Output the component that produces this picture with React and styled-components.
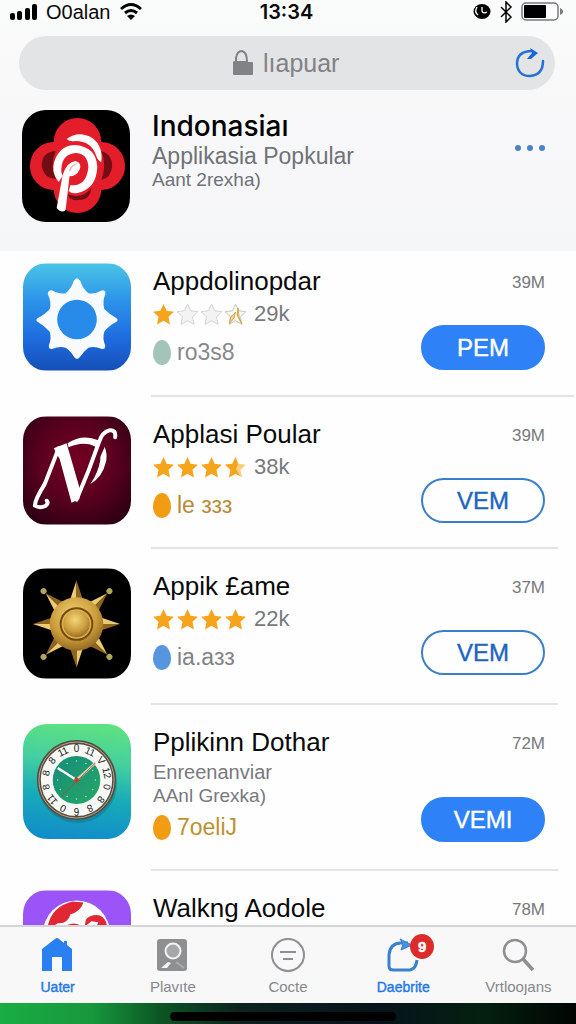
import React from "react";
import styled, { createGlobalStyle } from "styled-components";

const GlobalStyle = createGlobalStyle`
  * { box-sizing: border-box; }
  body { margin: 0; background: #fefefe; font-family: "Liberation Sans", Arial, sans-serif; color: #0a0a0a; }
  button, input { font: inherit; color: inherit; background: none; border: 0; padding: 0; margin: 0; }
  h1, h2, p, ul { margin: 0; padding: 0; font-weight: 400; }
  svg { display: block; flex: none; }
`;

const Screen = styled.div`
  display: flex;
  flex-direction: column;
  height: 100vh;
  overflow: hidden;
`;

const Header = styled.header`
  flex: none;
  background: linear-gradient(#fafbfb, #f8f8f9 40%, #f5f6f8);
  padding-bottom: 29px;
`;

const StatusBar = styled.div`
  display: grid;
  grid-template-columns: 1fr auto 1fr;
  align-items: center;
  height: 24px;
  padding: 0 12px 0 9px;
`;

const StatusGroup = styled.div`
  display: flex;
  align-items: center;
  justify-content: ${(p) => (p.$end ? "flex-end" : "flex-start")};
  gap: 8px;
  font-size: 20px;
  line-height: 24px;
`;

const Clock = styled.time`
  font: 600 20px/24px Inter, sans-serif;
`;

const AddressBar = styled.form`
  display: flex;
  align-items: center;
  height: 54px;
  margin: 12px 21px 0 19px;
  padding: 0 10px 0 42px;
  border-radius: 27px;
  background: #e3e4e5;
`;

const Address = styled.label`
  flex: 1;
  display: flex;
  align-items: center;
  justify-content: center;
  gap: 10px;
  color: #808285;
`;

const AddressInput = styled.input`
  width: 80px;
  height: 36px;
  font-size: 25px;
  outline: none;
`;

const IconButton = styled.button`
  display: flex;
  cursor: pointer;
`;

const Feature = styled.section`
  display: flex;
  align-items: flex-start;
  gap: 22px;
  margin: 20px 30px 0 22px;
`;

const AppIcon = styled.svg`
  width: 108px;
  height: ${(p) => p.$height}px;
  border-radius: 24px;
`;

const Main = styled.div`
  flex: 1;
  min-width: 0;
`;

const FeatureTitle = styled.h1`
  font: 500 28px/32px Inter, sans-serif;
  color: #000;
`;

const FeatureNote = styled.p`
  font-size: ${(p) => (p.$small ? 19 : 23)}px;
  line-height: ${(p) => (p.$small ? 20 : 28)}px;
  color: #6f7276;
`;

const MoreButton = styled(IconButton)`
  margin-top: 34px;
`;

const List = styled.ul`
  flex: 1;
  min-height: 0;
  overflow: hidden;
  list-style: none;
`;

const Row = styled.li`
  display: flex;
  align-items: flex-start;
  gap: 22px;
  min-height: ${(p) => p.$height}px;
  padding: ${(p) => (p.$first ? 12 : 19)}px 31px 0 23px;
  position: relative;
  &::after {
    content: "";
    position: absolute;
    left: 151px;
    right: ${(p) => (p.$first ? 2 : 18)}px;
    bottom: 0;
    height: 2px;
    background: #e3e4e6;
  }
`;

const Title = styled.h2`
  font-size: 26px;
  line-height: 36px;
  white-space: nowrap;
`;

const Rating = styled.div`
  display: flex;
  align-items: center;
  gap: 3px;
  height: 30px;
`;

const Votes = styled.span`
  margin-left: 5px;
  font-size: 22px;
  color: #77797c;
`;

const Detail = styled.p`
  font-size: ${(p) => (p.$small ? 19 : 20)}px;
  line-height: 24px;
  color: #77797c;
`;

const Tag = styled.p`
  display: flex;
  align-items: center;
  gap: 6px;
  margin-top: ${(p) => (p.$tight ? 4 : 8)}px;
  font-size: 23px;
  line-height: 30px;
  color: ${(p) => p.$color};
`;

const Drop = styled.span`
  width: 18px;
  height: 25px;
  border-radius: 9px / 14px 14px 11px 11px;
  background: ${(p) => p.$color};
`;

const Side = styled.div`
  display: flex;
  flex-direction: column;
  align-items: flex-end;
`;

const Size = styled.span`
  font-size: 17px;
  line-height: 40px;
  height: 36px;
  color: #77797c;
`;

const GetButton = styled.button`
  width: 124px;
  height: 45px;
  margin-top: ${(p) => (p.$low ? 37 : 26)}px;
  border-radius: 23px;
  border: 2px solid ${(p) => (p.$filled ? "#2f81f7" : "#3b7fcb")};
  background: ${(p) => (p.$filled ? "#2f81f7" : "#fefefe")};
  color: ${(p) => (p.$filled ? "#fff" : "#1d66bf")};
  font-size: 24px;
  -webkit-text-stroke: 0.4px currentColor;
  cursor: pointer;
`;

const TabBar = styled.nav`
  flex: none;
  display: flex;
  height: 78px;
  border-top: 2px solid #d5d5d9;
  background: #f8f8f9;
`;

const Tab = styled.a`
  flex: 1;
  display: flex;
  flex-direction: column;
  align-items: center;
  gap: 4px;
  padding-top: 10px;
  font-size: ${(p) => (p.$active ? 14 : 15)}px;
  line-height: 20px;
  text-decoration: none;
  color: ${(p) => (p.$active ? "#1f78e4" : "#85878a")};
  ${(p) => p.$active && "-webkit-text-stroke: 0.4px currentColor;"}
`;

const TabIcon = styled.span`
  position: relative;
  display: block;
`;

const Badge = styled.span`
  position: absolute;
  left: 24px;
  top: -3px;
  width: 24px;
  height: 25px;
  border-radius: 50%;
  background: #dd2b2b;
  color: #fff;
  font: 700 15px/25px "Liberation Sans", sans-serif;
  text-align: center;
`;

const HomeStrip = styled.footer`
  flex: none;
  display: flex;
  justify-content: center;
  height: 21px;
  padding: 9px 10px 0 0;
  background: linear-gradient(90deg, #19ad43 0%, #17983c 16%, #0c5423 28%, #0c2220 42%, #07131b 65%, #03200f 84%, #010503 100%);
`;

const HomeIndicator = styled.span`
  width: 40%;
  height: 9px;
  border-radius: 5px;
  background: #000;
`;

const STAR = "M10.500 0 L13.600 6.800 L21 7.700 L15.500 12.700 L17 20.500 L10.500 16.700 L4 20.500 L5.500 12.700 L0 7.700 L7.400 6.800 Z";

function Star({ kind }) {
  const gold = "#f5a41c";
  return (
    <svg width="21" height="21" viewBox="0 0 21 21" aria-hidden="true">
      {kind === "full" && <path d={STAR} fill={gold} />}
      {kind === "empty" && <path d={STAR} fill="#f3f3f4" stroke="#d3d4d7" />}
      {kind === "thin" && (
        <>
          <path d={STAR} fill="#faf8f3" stroke="#c9c7c0" />
          <path d="M10.500 8 L9 14 L4.500 19.500 L5.800 12.700 L9 10 Z M13 4 L12 11 L16.500 19.500 L14 13Z" fill="#f3d690" stroke="#c99834" strokeWidth="0.800" />
        </>
      )}
      {kind === "most" && (
        <>
          <path d={STAR} fill="#f8cf7f" />
          <path d="M10.500 0 L13 7 L11 12 L15 19 L10.500 16.700 L4 20.500 L5.500 12.700 L0 7.700 L7.400 6.800 Z" fill={gold} />
        </>
      )}
    </svg>
  );
}

function FlowerArt() {
  return (
    <AppIcon $height={112} viewBox="0 0 109 112" preserveAspectRatio="none" aria-hidden="true">
      <rect width="109" height="112" />
      <g fill="#e41d2a">
        <circle cx="56" cy="32" r="24" />
        <circle cx="32" cy="56" r="24" />
        <circle cx="80" cy="56" r="24" />
        <circle cx="56" cy="79" r="24" />
      </g>
      <g fill="#720d14">
        <path d="M34 41 Q20 42 20 55 Q21 68 34 69 Q28 55 34 41Z" />
        <path d="M80 41 Q91 44 91 56 Q90 68 80 70 Q86 55 80 41Z" />
        <path d="M46 84 Q60 90 70 78 Q69 90 57 90 Q48 91 46 84Z" />
      </g>
      <path
        d="M37 72 Q28 61 34 48 Q40 35 54 35 Q75 37 76 57 Q75 79 56 83 Q50 84 47 81 L49 75 Q65 77 67 57 Q66 43 54 43 Q42 44 40 56 Q39 62 41 66Z"
        fill="#fff"
      />
      <path d="M45 29 Q57 20 71 28 Q82 36 80 52 Q76 50 75 46 Q70 31 54 31 Q48 32 45 29Z" fill="#fff" />
      <path d="M35 98 L41 65 Q45 52 54 51 Q61 53 58 60 Q54 67 48 66 L44 100 Q40 104 35 98Z" fill="#fff" />
      <path d="M48 61 Q50 55 55 54" stroke="#e7b6b6" strokeWidth="1.500" fill="none" />
    </AppIcon>
  );
}

function SunArt() {
  return (
    <AppIcon $height={108} viewBox="0 0 109 108" aria-hidden="true">
      <defs>
        <linearGradient id="sky" x1="0" y1="0" x2="0" y2="1">
          <stop offset="0" stopColor="#4ac4e6" />
          <stop offset="0.350" stopColor="#2c93e9" />
          <stop offset="0.700" stopColor="#1f6ce0" />
          <stop offset="1" stopColor="#154fb6" />
        </linearGradient>
      </defs>
      <rect width="109" height="108" fill="url(#sky)" />
      <path
        d="M51 18 Q54.500 12 58 18 Q60 25 66 30 Q73 31 80 27 Q84 27 83 31 Q80 38 82 46 Q87 51 94 55 Q97 57 94 59 Q86 63 82 69 Q80 76 83 83 Q83 87 79 86 Q72 83 66 85 Q61 89 57 95 Q54.500 98 52 95 Q48 88 43 85 Q37 83 30 86 Q26 87 26 83 Q29 76 27 69 Q22 63 15 59 Q12 57 15 55 Q23 51 27 46 Q29 39 25 31 Q25 27 29 27 Q37 31 43 30 Q49 25 51 18Z"
        fill="#f7fafe"
      />
      <circle cx="54.500" cy="56.500" r="20" fill="#288bea" />
    </AppIcon>
  );
}

function MonogramArt() {
  return (
    <AppIcon $height={109} viewBox="0 0 109 109" aria-hidden="true">
      <defs>
        <radialGradient id="wine" cx="50%" cy="42%" r="70%">
          <stop offset="0" stopColor="#750022" />
          <stop offset="0.500" stopColor="#5a001e" />
          <stop offset="1" stopColor="#280011" />
        </radialGradient>
      </defs>
      <rect width="109" height="109" fill="url(#wine)" />
      <path d="M45 27 Q60 17 76 24 Q86 30 84 45 Q80 62 68 68 Q76 57 78 44 Q79 31 67 28 Q57 26 46 31Z" fill="#fff" />
      <path d="M82 22 L68 53 L56 80" stroke="#610020" strokeWidth="8" fill="none" />
      <path d="M93 21 Q94 13 87 14 Q80 16 77 25 Q67 54 54 84" fill="none" stroke="#fff" strokeWidth="4" strokeLinecap="round" />
      <path d="M36 32 L22 68 Q12 84 12 90 Q17 93 23 90 Q26 88 24 85" fill="none" stroke="#fff" strokeWidth="4" strokeLinecap="round" />
      <path d="M31 32 L44 27 L57 72 L57 83 L49 87 L37 43Z" fill="#fff" />
    </AppIcon>
  );
}

function CompassArt() {
  return (
    <AppIcon $height={111} viewBox="0 0 109 111" aria-hidden="true">
      <defs>
        <radialGradient id="gold" cx="45%" cy="35%" r="70%">
          <stop offset="0" stopColor="#f3d679" />
          <stop offset="0.600" stopColor="#cb9c3b" />
          <stop offset="1" stopColor="#8a611b" />
        </radialGradient>
      </defs>
      <rect width="109" height="111" />
      {[0, 45, 90, 135, 180, 225, 270, 315].map((angle) => (
        <g key={angle} transform={`rotate(${angle} 54 56)`}>
          <path d="M54 12 L46 36 L54 44Z" fill="#edcb72" />
          <path d="M54 12 L62 36 L54 44Z" fill="#8e651e" />
          {angle % 90 !== 0 && <circle cx="54" cy="9" r="3" fill="#b4a75c" />}
        </g>
      ))}
      <circle cx="54" cy="56" r="27" fill="url(#gold)" />
      <circle cx="54" cy="56" r="16" fill="#d9ae4b" stroke="#734a0d" strokeWidth="2" />
      <circle cx="54" cy="56" r="14" fill="url(#gold)" stroke="#dfb453" strokeWidth="1" />
    </AppIcon>
  );
}

function ClockArt() {
  return (
    <AppIcon $height={115} viewBox="0 0 109 115" preserveAspectRatio="none" aria-hidden="true">
      <defs>
        <linearGradient id="lagoon" x1="0.300" y1="0" x2="0.200" y2="1">
          <stop offset="0" stopColor="#5be083" />
          <stop offset="0.300" stopColor="#44cfa0" />
          <stop offset="0.600" stopColor="#18acb8" />
          <stop offset="1" stopColor="#118bcb" />
        </linearGradient>
        <linearGradient id="dial" x1="0" y1="0" x2="1" y2="1">
          <stop offset="0" stopColor="#168d78" />
          <stop offset="1" stopColor="#25a768" />
        </linearGradient>
      </defs>
      <rect width="109" height="115" fill="url(#lagoon)" />
      <circle cx="55" cy="59" r="40" fill="#145f66" opacity="0.350" />
      <circle cx="54" cy="56" r="38" fill="#f8f8f5" stroke="#554d40" strokeWidth="4" />
      <circle cx="54" cy="56" r="38" fill="none" stroke="#b3a98e" strokeWidth="1" />
      <circle cx="54" cy="56" r="24" fill="url(#dial)" />
      {["0", "11", "V", "12", "0", "8", "8", "6", "0", "11", "8", "8", "8", "11"].map((label, i) => (
        <text
          key={i}
          x="54"
          y="28"
          textAnchor="middle"
          fontSize="10"
          fontFamily="Liberation Sans, sans-serif"
          fill="#15221f"
          transform={`rotate(${(i * 360) / 14} 54 56)`}
        >
          {label}
        </text>
      ))}
      {[0, 30, 60, 90, 120, 150, 180, 210, 240, 270, 300, 330].map((a) => (
        <circle key={a} cx="54" cy="37" r="0.700" fill="#bdeacb" transform={`rotate(${a} 54 56)`} />
      ))}
      <path d="M54 56 L35 44" stroke="#fff" strokeWidth="2.500" />
      <path d="M54 56 L73 39" stroke="#e5cdb6" strokeWidth="2.500" />
      <path d="M73 39 L39 72" stroke="#a04d36" strokeWidth="0.800" />
      <circle cx="54" cy="56" r="2.500" fill="#c3402d" />
    </AppIcon>
  );
}

function GlobeArt() {
  return (
    <AppIcon $height={111} viewBox="0 0 109 111" aria-hidden="true">
      <rect width="109" height="111" fill="#9b54f7" />
      <circle cx="54" cy="44" r="34" fill="#fff" />
      <path d="M25 36 Q29 16 50 11 L61 12 Q58 21 48 24 Q45 34 35 33 L29 37 L27 46 L22 45Z" fill="#e12634" />
      <path d="M63 36 Q61 27 71 25 Q80 23 84 32 L86 44 L72 41 L76 32 L69 31Z" fill="#e12634" />
      <path d="M42 36 Q53 30 60 37 L56 46 L43 44Z" fill="#e12634" />
    </AppIcon>
  );
}

const apps = [
  { title: "Appdolinopdar", art: <SunArt />, height: 146, stars: ["full", "empty", "empty", "thin"], votes: "29k", tag: "ro3s8", drop: "#a3c4b8", ink: "#87898b", size: "39M", action: "PEM", filled: true },
  { title: "Apþlasi Poular", art: <MonogramArt />, height: 152, stars: ["full", "full", "full", "most"], votes: "38k", tag: "le ззз", drop: "#f19c12", ink: "#b88a35", size: "39M", action: "VEM" },
  { title: "Appik £ame", art: <CompassArt />, height: 156, stars: ["full", "full", "full", "full"], votes: "22k", tag: "ia.aзз", drop: "#5796df", ink: "#808285", size: "37M", action: "VEM" },
  { title: "Pplikinn Dothar", art: <ClockArt />, height: 166, details: ["Enreenanviar", "AAnl Grexka)"], tag: "7oeliJ", drop: "#f19c12", ink: "#bd912f", size: "72M", action: "VEMI", filled: true },
  { title: "Walkng Aodole", art: <GlobeArt />, height: 156, size: "78M" },
];

function AppRow({ app, first }) {
  return (
    <Row $first={first} $height={app.height}>
      {app.art}
      <Main>
        <Title>{app.title}</Title>
        {app.stars && (
          <Rating>
            {app.stars.map((kind, i) => (
              <Star key={i} kind={kind} />
            ))}
            <Votes>{app.votes}</Votes>
          </Rating>
        )}
        {app.details &&
          app.details.map((line, i) => (
            <Detail key={line} $small={i > 0}>
              {line}
            </Detail>
          ))}
        {app.tag && (
          <Tag $color={app.ink} $tight={Boolean(app.details)}>
            <Drop $color={app.drop} />
            {app.tag}
          </Tag>
        )}
      </Main>
      <Side>
        <Size>{app.size}</Size>
        {app.action && (
          <GetButton type="button" $filled={app.filled} $low={Boolean(app.details)}>
            {app.action}
          </GetButton>
        )}
      </Side>
    </Row>
  );
}

const tabs = [
  {
    label: "Uater",
    active: true,
    icon: (
      <svg width="34" height="36" viewBox="0 0 34 36" fill="#2a7ff3">
        <path d="M1 12 L14 2 Q16 0 18 2 L23 6 V4 H26 V8 L31 12 V34 H21 V20 H11 V34 H1Z" />
      </svg>
    ),
  },
  {
    label: "Plavıte",
    icon: (
      <svg width="34" height="36" viewBox="0 0 34 36">
        <rect x="1" y="2" width="30" height="32" rx="3" fill="#8e8f91" />
        <circle cx="17" cy="14" r="7.500" fill="#a6a7a9" stroke="#f4f4f5" strokeWidth="2" />
        <path d="M5 31 L12 25 L15 26 L11 31Z" fill="#f4f4f5" />
        <path d="M20 25 L28 31" stroke="#a9aaac" strokeWidth="2" />
      </svg>
    ),
  },
  {
    label: "Cocte",
    icon: (
      <svg width="36" height="36" viewBox="0 0 36 36" fill="none" stroke="#8e8f91" strokeWidth="2">
        <circle cx="18" cy="18" r="16" />
        <path d="M10 15 H26 M13 22 H23" />
      </svg>
    ),
  },
  {
    label: "Daebrite",
    active: true,
    badge: "9",
    icon: (
      <svg width="34" height="36" viewBox="0 0 34 36" fill="none" stroke="#3880d0" strokeWidth="3">
        <path d="M22 6 H15 Q4 6 3 18 V29 Q3 33 7 33 H24 Q30 32 31 23" />
        <path d="M14 2 L26 8 L15 13 L17 7Z" fill="#4a91df" strokeWidth="1" />
      </svg>
    ),
  },
  {
    label: "Vrtlooȷans",
    icon: (
      <svg width="34" height="36" viewBox="0 0 34 36" fill="none" stroke="#8e8f91">
        <circle cx="14" cy="14" r="11" strokeWidth="2.500" />
        <path d="M22 22 L32 33" strokeWidth="3.500" />
      </svg>
    ),
  },
];

export default function App() {
  return (
    <Screen>
      <GlobalStyle />
      <Header>
        <StatusBar>
          <StatusGroup>
            <svg width="29" height="20" viewBox="0 0 29 20" aria-label="Signal">
              <rect x="1" y="11" width="5" height="7" rx="2" />
              <rect x="8" y="9" width="5" height="9" rx="2" />
              <rect x="16" y="6" width="5" height="12" rx="2" />
              <rect x="23" y="2" width="5" height="16" rx="2" />
            </svg>
            <span>O0alan</span>
            <svg width="24" height="20" viewBox="0 0 24 20" fill="none" stroke="#000" strokeWidth="3" aria-label="Wi-Fi">
              <path d="M2 7 Q12 -2 22 7" />
              <path d="M6 11 Q12 6 18 11" />
              <path d="M8 14 Q12 11 16 14 L12 18Z" fill="#000" stroke="none" />
            </svg>
          </StatusGroup>
          <Clock>13:34</Clock>
          <StatusGroup $end>
            <svg width="18" height="18" viewBox="0 0 18 18" aria-label="Rotation lock">
              <ellipse cx="9" cy="8.500" rx="8.500" ry="7.500" />
              <path d="M4 4 Q1 9 5 12 M9 4 V8 Q10 11 14 9" fill="none" stroke="#fff" strokeWidth="1.300" />
            </svg>
            <svg width="14" height="22" viewBox="0 0 14 22" fill="none" stroke="#000" strokeWidth="1.500" aria-label="Bluetooth">
              <path d="M2 6 L12 16 L7 21 V1 L12 6 L2 16" />
            </svg>
            <svg width="43" height="20" viewBox="0 0 43 20" aria-label="Battery">
              <rect x="1" y="1" width="36" height="17" rx="4" fill="#fcfcfc" stroke="#77797b" strokeWidth="1.500" />
              <rect x="3" y="3" width="22" height="13" rx="1" />
              <path d="M39 6 Q42 7 42 10 Q42 12 39 13Z" fill="#77797b" />
            </svg>
          </StatusGroup>
        </StatusBar>
        <AddressBar onSubmit={(e) => e.preventDefault()}>
          <Address>
            <svg width="20" height="26" viewBox="0 0 20 26" aria-hidden="true">
              <path d="M1 11 H15 V12 H19 Q20 12 20 13 V24 Q20 25 19 25 H1 Q0 25 0 24 V12Z" fill="#808285" />
              <path d="M3 12 V8 Q4 1 9 1 Q14 2 14 12" fill="none" stroke="#808285" strokeWidth="2" />
            </svg>
            <AddressInput aria-label="Address" defaultValue="lıapuar" />
          </Address>
          <IconButton type="button" aria-label="Reload">
            <svg width="30" height="32" viewBox="0 0 30 32">
              <path d="M17 4 Q2 4 2 17 Q3 29 15 29 Q28 28 28 14" fill="none" stroke="#2472d8" strokeWidth="2.500" strokeLinecap="round" />
              <path d="M15 1 L23 6 L16 12 L12 12 L17 6Z" fill="#1767d8" />
            </svg>
          </IconButton>
        </AddressBar>
        <Feature>
          <FlowerArt />
          <Main>
            <FeatureTitle>Indonasiaı</FeatureTitle>
            <FeatureNote>Applikasia Popkular</FeatureNote>
            <FeatureNote $small>Aant 2rexha)</FeatureNote>
          </Main>
          <MoreButton type="button" aria-label="More">
            <svg width="32" height="8" viewBox="0 0 32 8" fill="#4b84c6">
              <circle cx="4" cy="4" r="3" />
              <circle cx="16" cy="4" r="3" />
              <circle cx="28" cy="4" r="3" />
            </svg>
          </MoreButton>
        </Feature>
      </Header>
      <List>
        {apps.map((app, i) => (
          <AppRow key={app.title} app={app} first={i === 0} />
        ))}
      </List>
      <TabBar>
        {tabs.map((tab) => (
          <Tab key={tab.label} href="#" $active={tab.active}>
            <TabIcon>
              {tab.icon}
              {tab.badge && <Badge>{tab.badge}</Badge>}
            </TabIcon>
            {tab.label}
          </Tab>
        ))}
      </TabBar>
      <HomeStrip>
        <HomeIndicator />
      </HomeStrip>
    </Screen>
  );
}
